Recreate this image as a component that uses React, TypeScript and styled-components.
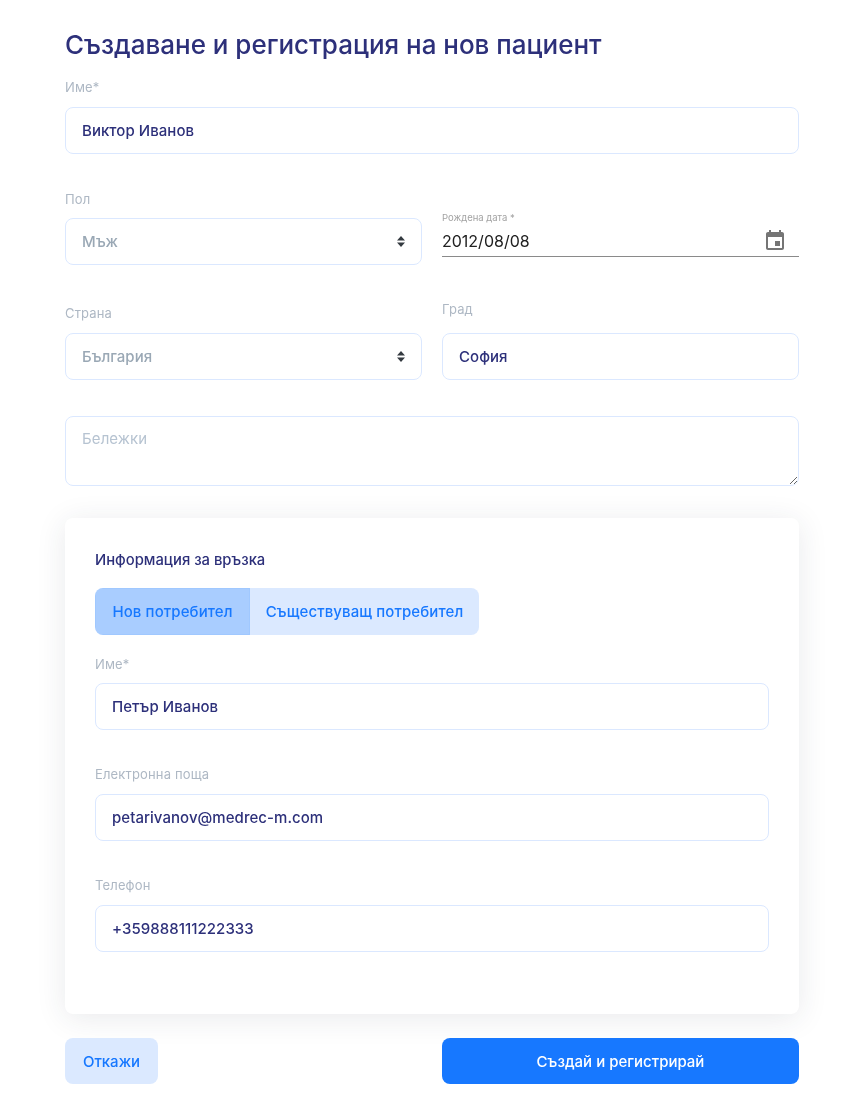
import React from "react";
import styled, { createGlobalStyle } from "styled-components";

const FONT = `Inter, "Noto Sans", sans-serif`;

const Global = createGlobalStyle`
  html, body { margin: 0; padding: 0; background: #fff; }
  body { font-family: ${FONT}; }
  * { box-sizing: border-box; }
`;

const Page = styled.div`
  width: 842px;
  padding: 29px 43px 22px 65px;
  display: flex;
  flex-direction: column;
  will-change: transform;
`;
const Title = styled.h1`
  margin: 0 0 16px;
  font-size: 26px;
  line-height: 32px;
  font-weight: 500;
  color: #2d307a;
  letter-spacing: -0.02px;
`;
const Field = styled.div<{ $after?: number }>`
  display: flex;
  flex-direction: column;
  margin-bottom: ${(p) => p.$after ?? 0}px;
`;
const Label = styled.label<{ $gap?: number; $top?: number }>`
  font-size: 13px;
  line-height: 20px;
  letter-spacing: 0.15px;
  color: #aeb8c4;
  margin-top: ${(p) => p.$top ?? 0}px;
  margin-bottom: ${(p) => p.$gap ?? 10}px;
`;
const Input = styled.input`
  height: 47px;
  width: 100%;
  padding: 0 16px;
  border: 1px solid #dbe8ff;
  border-radius: 8px;
  background: #fff;
  font-family: ${FONT};
  font-size: 15px;
  font-weight: 500;
  letter-spacing: 0.05px;
  color: #2d307a;
  outline: none;
`;
const Row = styled.div<{ $after: number }>`
  display: grid;
  grid-template-columns: 357px 357px;
  column-gap: 20px;
  margin-bottom: ${(p) => p.$after}px;
`;
const SelectWrap = styled.div`
  position: relative;
  height: 47px;
`;
const Select = styled.select`
  appearance: none;
  height: 47px;
  width: 100%;
  padding: 0 16px;
  border: 1px solid #dbe8ff;
  border-radius: 8px;
  background: #fff;
  font-family: ${FONT};
  font-size: 15px;
  font-weight: 500;
  color: #9aa8b5;
  outline: none;
`;
const Carets = styled.svg`
  position: absolute;
  right: 17px;
  top: 18px;
  width: 8px;
  height: 11px;
  pointer-events: none;
`;
const DateField = styled.div`
  align-self: end;
  height: 53px;
  display: flex;
  flex-direction: column;
`;
const DateLabel = styled.label`
  font-size: 9.5px;
  line-height: 11px;
  color: #a3a3a3;
`;
const DateBox = styled.div`
  display: flex;
  align-items: center;
  justify-content: space-between;
  height: 34px;
  padding: 3px 12px 0 0;
  border-bottom: 1px solid #8a8a8a;
`;
const DateInput = styled.input`
  border: none;
  outline: none;
  padding: 0;
  width: 200px;
  background: transparent;
  font-family: ${FONT};
  font-size: 16px;
  color: #212121;
`;
const Notes = styled.textarea`
  display: block;
  width: 100%;
  height: 70px;
  padding: 12px 16px;
  margin: 0 0 32px;
  border: 1px solid #dbe8ff;
  border-radius: 8px;
  background: #fff;
  font-family: ${FONT};
  font-size: 15px;
  letter-spacing: 0.1px;
  color: #2d307a;
  outline: none;
  &::placeholder { color: #b6c3d1; opacity: 1; }
`;
const Card = styled.section`
  background: #fff;
  border-radius: 8px;
  padding: 32px 30px 62px;
  margin-bottom: 24px;
  box-shadow: 0 4px 30px rgba(40, 50, 70, 0.1);
`;
const CardTitle = styled.h2`
  margin: 0 0 18px;
  font-size: 14.8px;
  line-height: 20px;
  font-weight: 500;
  color: #2d307a;
`;
const Tabs = styled.div`
  display: inline-flex;
  height: 47px;
  border-radius: 8px;
  overflow: hidden;
  margin-bottom: 19px;
  vertical-align: top;
`;
const Tab = styled.button<{ $active?: boolean; $w: number }>`
  width: ${(p) => p.$w}px;
  border: 1px solid ${(p) => (p.$active ? "#a0c8ff" : "#dbe9ff")};
  padding: 0;
  background: ${(p) => (p.$active ? "#a9cdff" : "#dbe9ff")};
  color: #1778ff;
  font-family: ${FONT};
  font-size: 15px;
  font-weight: 500;
  letter-spacing: 0.1px;
`;
const Actions = styled.div`
  display: flex;
  justify-content: space-between;
`;
const Button = styled.button<{ $primary?: boolean; $w: number }>`
  width: ${(p) => p.$w}px;
  height: 46px;
  border: none;
  border-radius: 8px;
  background: ${(p) => (p.$primary ? "#1778ff" : "#dbe9ff")};
  color: ${(p) => (p.$primary ? "#fff" : "#1778ff")};
  font-family: ${FONT};
  font-size: 15px;
  font-weight: 500;
`;

const CaretIcon = () => (
  <Carets viewBox="0 0 8 11">
    <path d="M4 0 L8 4.5 H0 Z M4 11 L0 6.5 H8 Z" fill="#343a40" />
  </Carets>
);

export default function App() {
  return (
    <Page>
      <Global />
      <Title>Създаване и регистрация на нов пациент</Title>
      <Field $after={35}>
        <Label>Име*</Label>
        <Input readOnly value="Виктор Иванов" />
      </Field>
      <Row $after={34}>
        <Field>
          <Label $gap={9}>Пол</Label>
          <SelectWrap>
            <Select defaultValue="Мъж">
              <option>Мъж</option>
            </Select>
            <CaretIcon />
          </SelectWrap>
        </Field>
        <DateField>
          <DateLabel>Рождена дата *</DateLabel>
          <DateBox>
            <DateInput readOnly value="2012/08/08" />
            <svg width="24" height="24" viewBox="0 0 24 24" fill="#757575">
              <path d="M17 12h-5v5h5v-5zM16 1v2H8V1H6v2H5c-1.11 0-1.99.9-1.99 2L3 19c0 1.1.89 2 2 2h14c1.1 0 2-.9 2-2V5c0-1.1-.9-2-2-2h-1V1h-2zm3 18H5V8h14v11z" />
            </svg>
          </DateBox>
        </DateField>
      </Row>
      <Row $after={36}>
        <Field>
          <Label $top={4}>Страна</Label>
          <SelectWrap>
            <Select defaultValue="България">
              <option>България</option>
            </Select>
            <CaretIcon />
          </SelectWrap>
        </Field>
        <Field>
          <Label $gap={14}>Град</Label>
          <Input readOnly value="София" />
        </Field>
      </Row>
      <Notes placeholder="Бележки" />
      <Card>
        <CardTitle>Информация за връзка</CardTitle>
        <Tabs>
          <Tab $active $w={155}>Нов потребител</Tab>
          <Tab $w={229}>Съществуващ потребител</Tab>
        </Tabs>
        <Field $after={34}>
          <Label $gap={9}>Име*</Label>
          <Input readOnly value="Петър Иванов" />
        </Field>
        <Field $after={34}>
          <Label>Електронна поща</Label>
          <Input readOnly value="petarivanov@medrec-m.com" />
        </Field>
        <Field>
          <Label>Телефон</Label>
          <Input readOnly value="+359888111222333" />
        </Field>
      </Card>
      <Actions>
        <Button $w={93}>Откажи</Button>
        <Button $primary $w={357}>Създай и регистрирай</Button>
      </Actions>
    </Page>
  );
}
